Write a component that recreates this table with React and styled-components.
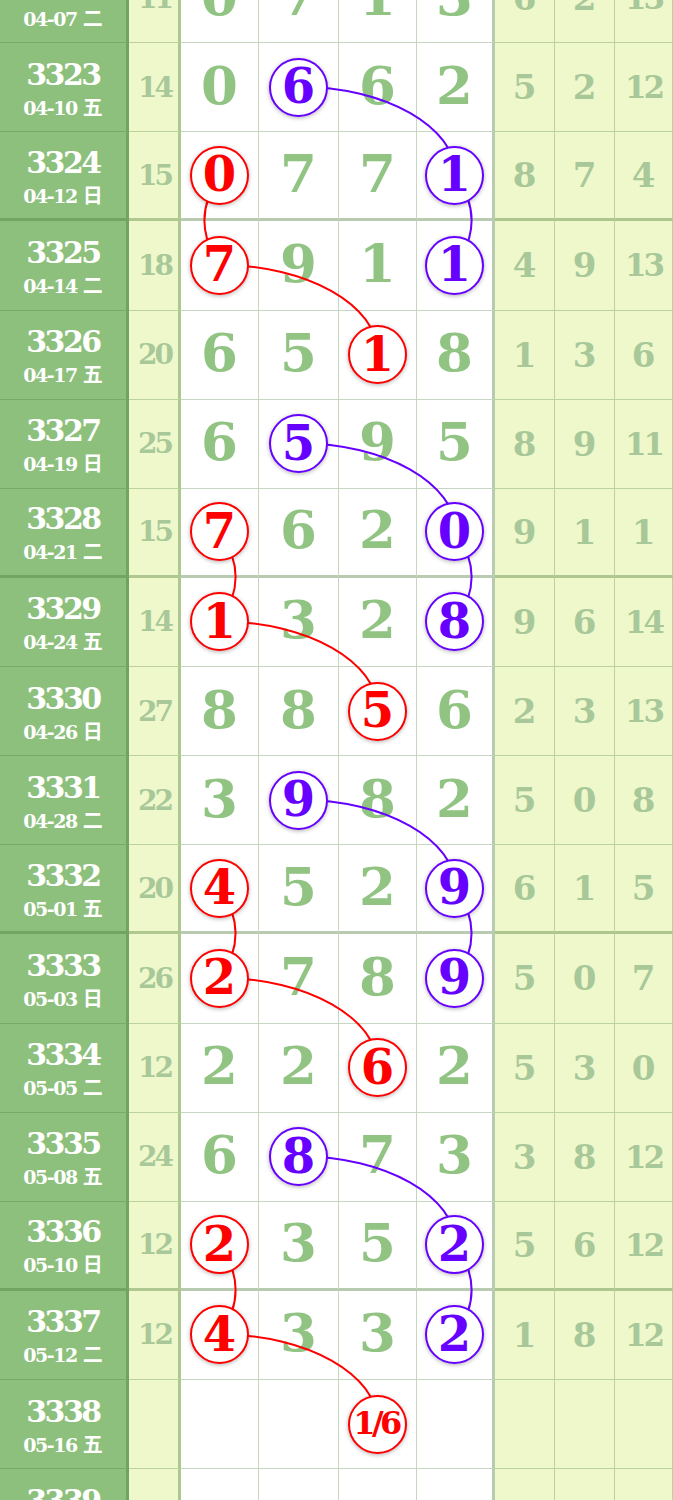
import React from "react";
import styled, { createGlobalStyle } from "styled-components";

const GlobalStyle = createGlobalStyle`
  html, body {
    margin: 0;
    padding: 0;
    background: #ffffff;
    overflow: hidden;
  }
`;

// layout numbers
const ROW_H = 89.125;
const TOP_OFFSET = -46;
const COLS = [129, 52, 78, 80, 78, 78, 60, 60, 58];
const DIGIT_X = [220, 299, 378, 456];

const LINE = "rgba(70, 120, 50, 0.3)";
const LINE_THICK = "rgba(70, 120, 50, 0.38)";
const RED = "#ff0000";
const PURPLE = "#6600ff";

const ROWS = [
  { no: "3322", date: "04-07 二", sum: "11", digits: ["0", "7", "1", "3"], stats: ["6", "2", "13"] },
  { no: "3323", date: "04-10 五", sum: "14", digits: ["0", "6", "6", "2"], stats: ["5", "2", "12"], marks: { 1: "purple" } },
  { no: "3324", date: "04-12 日", sum: "15", digits: ["0", "7", "7", "1"], stats: ["8", "7", "4"], marks: { 0: "red", 3: "purple" } },
  { no: "3325", date: "04-14 二", sum: "18", digits: ["7", "9", "1", "1"], stats: ["4", "9", "13"], marks: { 0: "red", 3: "purple" } },
  { no: "3326", date: "04-17 五", sum: "20", digits: ["6", "5", "1", "8"], stats: ["1", "3", "6"], marks: { 2: "red" } },
  { no: "3327", date: "04-19 日", sum: "25", digits: ["6", "5", "9", "5"], stats: ["8", "9", "11"], marks: { 1: "purple" } },
  { no: "3328", date: "04-21 二", sum: "15", digits: ["7", "6", "2", "0"], stats: ["9", "1", "1"], marks: { 0: "red", 3: "purple" } },
  { no: "3329", date: "04-24 五", sum: "14", digits: ["1", "3", "2", "8"], stats: ["9", "6", "14"], marks: { 0: "red", 3: "purple" } },
  { no: "3330", date: "04-26 日", sum: "27", digits: ["8", "8", "5", "6"], stats: ["2", "3", "13"], marks: { 2: "red" } },
  { no: "3331", date: "04-28 二", sum: "22", digits: ["3", "9", "8", "2"], stats: ["5", "0", "8"], marks: { 1: "purple" } },
  { no: "3332", date: "05-01 五", sum: "20", digits: ["4", "5", "2", "9"], stats: ["6", "1", "5"], marks: { 0: "red", 3: "purple" } },
  { no: "3333", date: "05-03 日", sum: "26", digits: ["2", "7", "8", "9"], stats: ["5", "0", "7"], marks: { 0: "red", 3: "purple" } },
  { no: "3334", date: "05-05 二", sum: "12", digits: ["2", "2", "6", "2"], stats: ["5", "3", "0"], marks: { 2: "red" } },
  { no: "3335", date: "05-08 五", sum: "24", digits: ["6", "8", "7", "3"], stats: ["3", "8", "12"], marks: { 1: "purple" } },
  { no: "3336", date: "05-10 日", sum: "12", digits: ["2", "3", "5", "2"], stats: ["5", "6", "12"], marks: { 0: "red", 3: "purple" } },
  { no: "3337", date: "05-12 二", sum: "12", digits: ["4", "3", "3", "2"], stats: ["1", "8", "12"], marks: { 0: "red", 3: "purple" } },
  { no: "3338", date: "05-16 五", sum: "", digits: ["", "", "1/6", ""], stats: ["", "", ""], marks: { 2: "red" } },
  { no: "3339", date: "05-18 日", sum: "", digits: ["", "", "", ""], stats: ["", "", ""] },
];

// connecting lines: arc = sideways then down, drop = same column next row
const LINKS = [
  { kind: "arc", from: [1, 1], to: [2, 3], color: PURPLE },
  { kind: "drop", from: [2, 3], to: [3, 3], bend: 1, color: PURPLE },
  { kind: "drop", from: [2, 0], to: [3, 0], bend: -1, color: RED },
  { kind: "arc", from: [3, 0], to: [4, 2], color: RED },

  { kind: "arc", from: [5, 1], to: [6, 3], color: PURPLE },
  { kind: "drop", from: [6, 3], to: [7, 3], bend: 1, color: PURPLE },
  { kind: "drop", from: [6, 0], to: [7, 0], bend: 1, color: RED },
  { kind: "arc", from: [7, 0], to: [8, 2], color: RED },

  { kind: "arc", from: [9, 1], to: [10, 3], color: PURPLE },
  { kind: "drop", from: [10, 3], to: [11, 3], bend: 1, color: PURPLE },
  { kind: "drop", from: [10, 0], to: [11, 0], bend: 1, color: RED },
  { kind: "arc", from: [11, 0], to: [12, 2], color: RED },

  { kind: "arc", from: [13, 1], to: [14, 3], color: PURPLE },
  { kind: "drop", from: [14, 3], to: [15, 3], bend: 1, color: PURPLE },
  { kind: "drop", from: [14, 0], to: [15, 0], bend: 1, color: RED },
  { kind: "arc", from: [15, 0], to: [16, 2], color: RED },
];

const centerOf = ([row, col]) => ({
  x: DIGIT_X[col],
  y: row * ROW_H + ROW_H / 2 - 1,
});

const linkPath = (link) => {
  const a = centerOf(link.from);
  const b = centerOf(link.to);
  if (link.kind === "arc") {
    const k = 0.55;
    return `M ${a.x} ${a.y} C ${a.x + k * (b.x - a.x)} ${a.y}, ${b.x} ${b.y - k * (b.y - a.y)}, ${b.x} ${b.y}`;
  }
  const d = 21 * link.bend;
  return `M ${a.x} ${a.y} C ${a.x + d} ${a.y + 30}, ${b.x + d} ${b.y - 30}, ${b.x} ${b.y}`;
};

const Page = styled.div`
  width: 673px;
  height: 1500px;
  overflow: hidden;
`;

const Board = styled.div`
  position: relative;
  margin-top: ${TOP_OFFSET}px;
  display: grid;
  grid-template-columns: ${COLS.map((c) => `${c}px`).join(" ")};
  grid-auto-rows: ${ROW_H}px;
`;

const Cell = styled.div`
  box-sizing: border-box;
  display: flex;
  align-items: center;
  justify-content: center;
  border-bottom: ${(p) => (p.$groupEnd ? `3px solid ${LINE_THICK}` : `1px solid ${LINE}`)};
  border-right: ${(p) => (p.$edge ? `3px solid ${LINE_THICK}` : `1px solid ${LINE}`)};
  font-family: "DejaVu Serif", "Liberation Serif", serif;
  font-weight: 700;
`;

const IssueCell = styled(Cell)`
  flex-direction: column;
  background: #8dc07d;
  color: #ffffff;
  padding-top: 2px;
`;

const IssueNo = styled.div`
  font-size: 30px;
  font-weight: 700;
  line-height: 34px;
  letter-spacing: -2.5px;
`;

const IssueDate = styled.div`
  font-size: 19px;
  line-height: 22px;
  margin-top: 4px;
  letter-spacing: -1.5px;

  span {
    font-family: "Noto Sans CJK SC", sans-serif;
    font-weight: 700;
    font-size: 20px;
    letter-spacing: 0;
    margin-left: 6px;
  }
`;

const SumCell = styled(Cell)`
  background: #eff8cb;
  color: #a8c899;
  font-size: 28px;
  letter-spacing: -3px;
  padding-left: 2px;
`;

const DigitCell = styled(Cell)`
  background: #ffffff;
  color: #91c483;
  font-size: 53px;
  padding-bottom: 5px;
`;

const StatCell = styled(Cell)`
  background: #eff8cb;
  color: #a8c899;
  font-size: ${(p) => (p.$wide ? 31 : 34)}px;
  letter-spacing: ${(p) => (p.$wide ? -3 : 0)}px;
`;

const Ball = styled.span`
  position: relative;
  z-index: 2;
  box-sizing: border-box;
  flex: none;
  width: 59px;
  height: 59px;
  margin-top: 5px;
  border-radius: 50%;
  border: 2.5px solid ${(p) => (p.$tone === "red" ? RED : PURPLE)};
  background: #ffffff;
  box-shadow: 0 1px 4px rgba(0, 0, 0, 0.3);
  color: ${(p) => (p.$tone === "red" ? RED : PURPLE)};
  display: flex;
  align-items: center;
  justify-content: center;
  font-size: ${(p) => (p.$small ? 32 : 48)}px;
  letter-spacing: ${(p) => (p.$small ? -3.5 : 0)}px;
  line-height: 1;
  padding-bottom: 2px;
  padding-right: ${(p) => (p.$small ? 3 : 0)}px;
`;

const Links = styled.svg`
  position: absolute;
  left: 0;
  top: 0;
  z-index: 1;
  pointer-events: none;
`;

export default function App() {
  const height = ROWS.length * ROW_H;

  return (
    <Page>
      <GlobalStyle />
      <Board>
        {ROWS.map((row, i) => {
          const groupEnd = i % 4 === 2;
          const marks = row.marks || {};
          const [day, week] = row.date.split(" ");
          return (
            <React.Fragment key={row.no}>
              <IssueCell $groupEnd={groupEnd} $edge>
                <IssueNo>{row.no}</IssueNo>
                <IssueDate>
                  {day}
                  <span>{week}</span>
                </IssueDate>
              </IssueCell>
              <SumCell $groupEnd={groupEnd} $edge>
                {row.sum}
              </SumCell>
              {row.digits.map((d, c) => (
                <DigitCell key={c} $groupEnd={groupEnd} $edge={c === 3}>
                  {marks[c] ? (
                    <Ball $tone={marks[c]} $small={d.length > 1}>
                      {d}
                    </Ball>
                  ) : (
                    d
                  )}
                </DigitCell>
              ))}
              {row.stats.map((s, c) => (
                <StatCell key={c} $groupEnd={groupEnd} $wide={s.length > 1}>
                  {s}
                </StatCell>
              ))}
            </React.Fragment>
          );
        })}
        <Links width="673" height={height} viewBox={`0 0 673 ${height}`}>
          {LINKS.map((link, i) => (
            <path
              key={i}
              d={linkPath(link)}
              fill="none"
              stroke={link.color}
              strokeWidth="2"
            />
          ))}
        </Links>
      </Board>
    </Page>
  );
}
